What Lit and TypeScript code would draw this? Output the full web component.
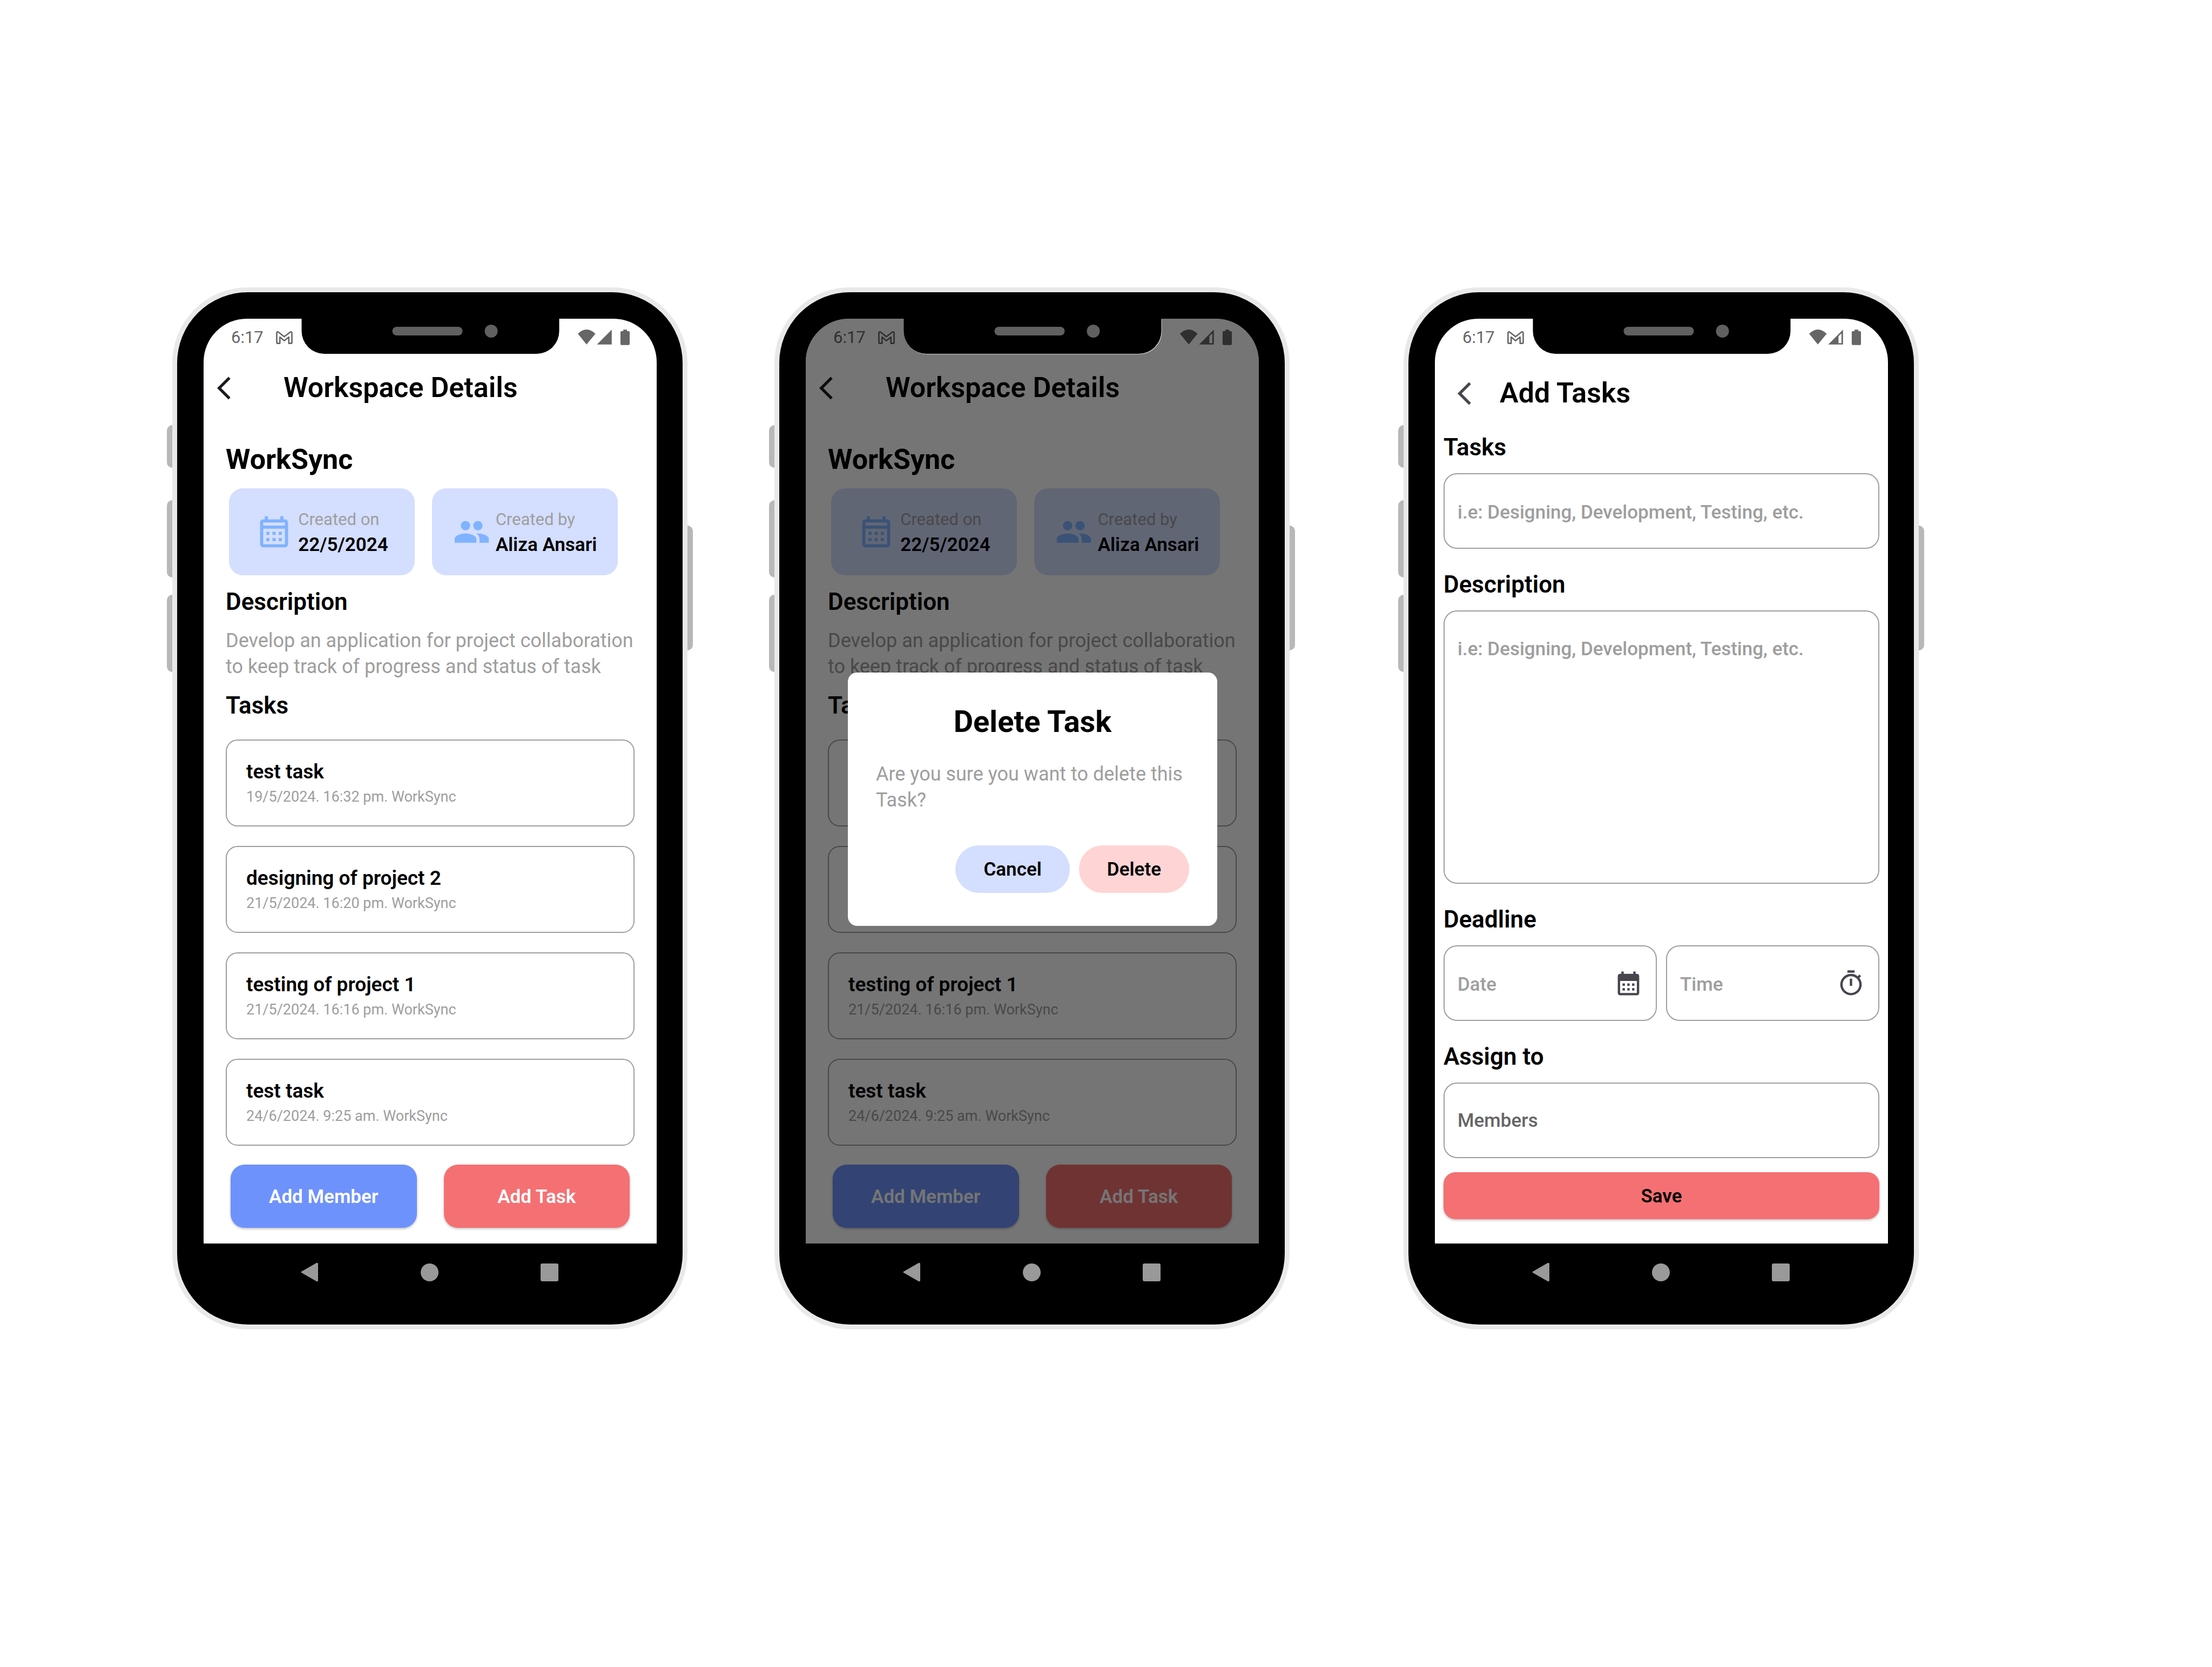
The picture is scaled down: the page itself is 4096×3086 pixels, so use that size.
import { LitElement, html, css } from "lit";
import { customElement, property } from "lit/decorators.js";

interface Task {
  title: string;
  detail: string;
}

const TASKS: Task[] = [
  { title: "test task", detail: "19/5/2024. 16:32 pm. WorkSync" },
  { title: "designing of project 2", detail: "21/5/2024. 16:20 pm. WorkSync" },
  { title: "testing of project 1", detail: "21/5/2024. 16:16 pm. WorkSync" },
  { title: "test task", detail: "24/6/2024. 9:25 am. WorkSync" },
];

const base = css`
  * {
    box-sizing: border-box;
  }
  h1,
  h2,
  h3,
  p,
  ul {
    margin: 0;
    padding: 0;
    list-style: none;
  }
  button,
  input,
  textarea {
    font: inherit;
    color: inherit;
    margin: 0;
    padding: 0;
    border: 0;
    background: none;
    outline: none;
  }
  svg {
    display: block;
    flex: none;
  }
  .title {
    font-size: 52px;
    line-height: 60px;
    font-weight: 600;
  }
  .heading {
    display: block;
    font-size: 44px;
    line-height: 49px;
    font-weight: 600;
  }
  .chevron {
    display: block;
    width: 51px;
    height: 51px;
  }
`;

const chevron = html`<svg width="51" height="51" viewBox="0 0 24 24" fill="currentColor">
  <path d="M11.67 3.87 9.9 2.1 0 12l9.9 9.9 1.77-1.77L3.54 12z" />
</svg>`;

/** Handset body with its side keys, status bar, screen and navigation keys. */
@customElement("phone-frame")
export class PhoneFrame extends LitElement {
  @property({ type: Boolean }) partialSignal = false;
  @property({ type: Boolean }) dimmed = false;

  static styles = [
    base,
    css`
      :host {
        display: block;
      }
      .body {
        position: relative;
        border: 9px solid #e9e9e9;
        border-radius: 140px;
        background: #000;
        padding: 49px 48px 44px 49px;
      }
      .key {
        position: absolute;
        width: 10px;
        background: #b8b8b8;
        border-radius: 10px 0 0 10px;
        left: -19px;
        height: 143px;
      }
      .silent {
        top: 246px;
        height: 79px;
      }
      .up {
        top: 385px;
      }
      .down {
        top: 560px;
      }
      .power {
        left: auto;
        right: -19px;
        top: 432px;
        height: 231px;
        border-radius: 0 10px 10px 0;
      }
      .screen {
        position: relative;
        display: flex;
        flex-direction: column;
        min-height: 1712px;
        background: #fff;
        border-radius: 80px 80px 0 0;
        overflow: hidden;
      }
      .status {
        display: flex;
        align-items: center;
        gap: 23px;
        height: 67px;
        padding: 2px 50px 0 51px;
        color: #666;
        font-size: 31px;
        line-height: 36px;
      }
      .note {
        width: 24px;
        height: 24px;
        background: #666;
        border-radius: 3px;
      }
      .levels {
        margin-left: auto;
      }
      .notch {
        position: absolute;
        top: 0;
        left: 50%;
        transform: translateX(-50%);
        width: 477px;
        height: 65px;
        padding: 11px 0 0 168px;
        display: flex;
        align-items: flex-start;
        gap: 41px;
        background: #000;
        border-radius: 0 0 42px 42px;
      }
      .dimmed .notch {
        box-shadow: 1px 1px 0 #d0d0d0;
      }
      .speaker {
        width: 130px;
        height: 16px;
        margin-top: 4px;
        border-radius: 8px;
        background: #606060;
      }
      .camera {
        width: 24px;
        height: 24px;
        border-radius: 50%;
        background: #606060;
      }
      .content {
        flex: 1;
        display: flex;
        flex-direction: column;
      }
      .keys {
        display: flex;
        justify-content: space-between;
        align-items: center;
        height: 106px;
        padding: 0 182px 0 180px;
        color: #999;
      }
    `,
  ];

  render() {
    return html`
      <div class="body ${this.dimmed ? "dimmed" : ""}">
        <span class="key silent"></span>
        <span class="key up"></span>
        <span class="key down"></span>
        <span class="key power"></span>
        <div class="screen">
          <div class="status">
            <span>6:17</span>
            <svg width="31" height="24" viewBox="389 61 129 100" fill="none" stroke="#666" stroke-width="11" stroke-linejoin="round">
              <path d="M395 148V76q0-12 12-8l46 36 46-36q13-4 13 8v72q0 7-7 7h-17v-48l-35 28-34-28v48h-17q-7 0-7-7z" />
            </svg>
            <span class="note"></span>
            <svg class="levels" width="96" height="29" viewBox="46 52 404 122" fill="#666">
              <path d="M46 85q68-66 137 0l-69 84z" />
              <path fill-rule="evenodd" d=${"M195 169 310 53v116z" + (this.partialSignal ? "M275 104v54h23V82z" : "")} />
              <path d="M400 65V53h29v12h13q8 0 8 8v92q0 8-8 8h-56q-8 0-8-8V73q0-8 8-8z" />
            </svg>
          </div>
          <div class="content"><slot></slot></div>
          <slot name="overlay"></slot>
          <div class="notch"><span class="speaker"></span><span class="camera"></span></div>
        </div>
        <div class="keys">
          <button aria-label="Back">
            <svg width="32" height="36" viewBox="0 0 32 36" fill="currentColor"><path d="M2 16.500 29 1q3-1 3 2v30q0 3-3 2L2 19.500q-3-1.500 0-3z" /></svg>
          </button>
          <button aria-label="Home">
            <svg width="33" height="33" viewBox="0 0 33 33" fill="currentColor"><circle cx="16.500" cy="16.500" r="16.500" /></svg>
          </button>
          <button aria-label="Recent apps">
            <svg width="33" height="33" viewBox="0 0 33 33" fill="currentColor"><rect width="33" height="33" rx="3" /></svg>
          </button>
        </div>
      </div>
    `;
  }
}

/** Workspace summary with its task list. */
@customElement("workspace-screen")
export class WorkspaceScreen extends LitElement {
  static styles = [
    base,
    css`
      :host {
        display: block;
      }
      .bar {
        display: flex;
        align-items: center;
        gap: 72px;
        height: 120px;
        padding: 2px 0 0 25px;
        color: #000;
      }
      .chevron {
        color: #1d1b20;
      }
      .page {
        padding: 44px 41px 29px;
      }
      .name {
        font-weight: 700;
      }
      .facts {
        display: grid;
        grid-template-columns: 1fr 1fr;
        gap: 32px;
        padding: 23px 31px 25px 6px;
      }
      .fact {
        display: flex;
        align-items: center;
        justify-content: center;
        gap: 10px;
        height: 161px;
        border-radius: 26px;
        background: #d4deff;
      }
      .fact svg {
        fill: #7fb3ff;
      }
      .label {
        padding-top: 2px;
        font-size: 31px;
        line-height: 46px;
        color: #9e9e9e;
      }
      .value {
        font-size: 35px;
        line-height: 48px;
        font-weight: 600;
        white-space: nowrap;
      }
      .about {
        padding: 23px 0 24px;
        font-size: 36px;
        line-height: 48px;
        color: #9e9e9e;
      }
      .tasks {
        display: grid;
        gap: 36px;
        padding: 38px 0 35px;
      }
      .task {
        border: 2px solid #9e9e9e;
        border-radius: 22px;
        padding: 38px 36px;
      }
      .name-of-task {
        font-size: 37px;
        line-height: 40px;
        font-weight: 600;
      }
      .detail {
        padding-top: 11px;
        font-size: 27px;
        line-height: 30px;
        color: #9e9e9e;
      }
      .actions {
        display: grid;
        grid-template-columns: 1fr 1fr;
        gap: 50px;
        padding: 0 9px;
      }
      .action {
        height: 117px;
        padding-top: 2px;
        border-radius: 26px;
        color: #fff;
        font-size: 35px;
        font-weight: 600;
        box-shadow: 0 2px 4px rgba(0, 0, 0, 0.25);
      }
      .member {
        background: #6e92fc;
      }
      .add {
        background: #f57072;
      }
    `,
  ];

  render() {
    return html`
      <header class="bar">
        <button class="chevron" aria-label="Back">${chevron}</button>
        <h1 class="title">Workspace Details</h1>
      </header>
      <div class="page">
        <h2 class="title name">WorkSync</h2>
        <div class="facts">
          <div class="fact">
            <svg width="69" height="69" viewBox="0 0 24 24">
              <path d="M19 4h-1V2h-2v2H8V2H6v2H5c-1.110 0-1.990.9-1.990 2L3 20a2 2 0 0 0 2 2h14c1.100 0 2-.9 2-2V6c0-1.100-.9-2-2-2zm0 16H5V10h14v10zm0-12H5V6h14v2zM9 14H7v-2h2v2zm4 0h-2v-2h2v2zm4 0h-2v-2h2v2zm-8 4H7v-2h2v2zm4 0h-2v-2h2v2zm4 0h-2v-2h2v2z" />
            </svg>
            <div>
              <p class="label">Created on</p>
              <p class="value">22/5/2024</p>
            </div>
          </div>
          <div class="fact">
            <svg width="69" height="69" viewBox="0 0 24 24">
              <path d="M16 11c1.660 0 2.990-1.340 2.990-3S17.660 5 16 5s-3 1.340-3 3 1.340 3 3 3zm-8 0c1.660 0 2.990-1.340 2.990-3S9.660 5 8 5 5 6.340 5 8s1.340 3 3 3zm0 2c-2.330 0-7 1.170-7 3.500V19h14v-2.500c0-2.330-4.670-3.500-7-3.500zm8 0c-.29 0-.62.02-.97.05 1.160.84 1.970 1.970 1.970 3.450V19h6v-2.500c0-2.330-4.670-3.500-7-3.500z" />
            </svg>
            <div>
              <p class="label">Created by</p>
              <p class="value">Aliza Ansari</p>
            </div>
          </div>
        </div>
        <h3 class="heading">Description</h3>
        <p class="about">Develop an application for project collaboration to keep track of progress and status of task</p>
        <h3 class="heading">Tasks</h3>
        <ul class="tasks">
          ${TASKS.map(
            (task) => html`<li class="task">
              <p class="name-of-task">${task.title}</p>
              <p class="detail">${task.detail}</p>
            </li>`
          )}
        </ul>
        <div class="actions">
          <button class="action member">Add Member</button>
          <button class="action add">Add Task</button>
        </div>
      </div>
    `;
  }
}

/** Confirmation shown over a dimmed screen. */
@customElement("delete-dialog")
export class DeleteDialog extends LitElement {
  static styles = [
    base,
    css`
      .scrim {
        position: absolute;
        inset: 0;
        display: flex;
        align-items: center;
        padding: 67px 77px 0 78px;
        background: rgba(0, 0, 0, 0.54);
      }
      .dialog {
        flex: 1;
        padding: 59px 52px 61px;
        border-radius: 17px;
        background: #fff;
      }
      .question {
        font-size: 56px;
        line-height: 64px;
        font-weight: 700;
        text-align: center;
      }
      .text {
        padding: 41px 0 60px;
        font-size: 36px;
        line-height: 48px;
        color: #9e9e9e;
      }
      .choices {
        display: flex;
        justify-content: flex-end;
        gap: 17px;
      }
      .choice {
        height: 88px;
        padding: 0 52px;
        border-radius: 44px;
        font-size: 35px;
        font-weight: 600;
      }
      .cancel {
        background: #d4deff;
      }
      .delete {
        background: #ffd4d4;
      }
    `,
  ];

  render() {
    return html`
      <div class="scrim">
        <div class="dialog" role="dialog" aria-modal="true" aria-labelledby="question">
          <h2 class="question" id="question">Delete Task</h2>
          <p class="text">Are you sure you want to delete this Task?</p>
          <div class="choices">
            <button class="choice cancel">Cancel</button>
            <button class="choice delete">Delete</button>
          </div>
        </div>
      </div>
    `;
  }
}

/** Form that creates a task. */
@customElement("add-task-screen")
export class AddTaskScreen extends LitElement {
  static styles = [
    base,
    css`
      :host {
        display: block;
      }
      .bar {
        display: flex;
        align-items: center;
        gap: 27px;
        height: 140px;
        padding: 2px 0 0 42px;
      }
      .chevron {
        color: #49454f;
      }
      .form {
        padding: 7px 16px 45px;
      }
      .group {
        display: grid;
        gap: 23px;
        padding-bottom: 42px;
      }
      .group.last {
        padding-bottom: 26px;
      }
      .pair {
        display: grid;
        grid-template-columns: 1fr 1fr;
        gap: 17px;
      }
      .field {
        display: flex;
        align-items: center;
        height: 140px;
        padding: 0 24px;
        border: 2px solid #9e9e9e;
        border-radius: 25px;
        color: #49454f;
      }
      .field.tall {
        height: 506px;
      }
      .input {
        flex: 1;
        min-width: 0;
        width: 100%;
        height: 100%;
        font-size: 35px;
        line-height: 48px;
        font-weight: 500;
        padding-top: 4px;
        resize: none;
      }
      .tall .input {
        padding-top: 46px;
      }
      .input::placeholder {
        color: #9e9e9e;
        opacity: 1;
      }
      .members {
        padding-top: 0;
      }
      .members::placeholder {
        color: #666;
      }
      .save {
        display: block;
        width: 100%;
        height: 87px;
        padding-top: 2px;
        border-radius: 22px;
        background: #f57072;
        font-size: 35px;
        font-weight: 600;
        box-shadow: 0 2px 4px rgba(0, 0, 0, 0.25);
      }
    `,
  ];

  render() {
    return html`
      <header class="bar">
        <button class="chevron" aria-label="Back">${chevron}</button>
        <h1 class="title">Add Tasks</h1>
      </header>
      <form class="form" @submit=${(e: Event) => e.preventDefault()}>
        <div class="group">
          <label class="heading" for="task">Tasks</label>
          <div class="field">
            <input class="input" id="task" placeholder="i.e: Designing, Development, Testing, etc." />
          </div>
        </div>
        <div class="group">
          <label class="heading" for="description">Description</label>
          <div class="field tall">
            <textarea class="input" id="description" placeholder="i.e: Designing, Development, Testing, etc."></textarea>
          </div>
        </div>
        <div class="group">
          <label class="heading" for="date">Deadline</label>
          <div class="pair">
            <div class="field">
              <input class="input" id="date" placeholder="Date" />
              <svg width="53" height="53" viewBox="0 0 24 24" fill="currentColor">
                <path d="M19 4h-1V2h-2v2H8V2H6v2H5c-1.110 0-1.990.9-1.990 2L3 20a2 2 0 0 0 2 2h14c1.100 0 2-.9 2-2V6c0-1.100-.9-2-2-2zm0 16H5V10h14v10zM9 14H7v-2h2v2zm4 0h-2v-2h2v2zm4 0h-2v-2h2v2zm-8 4H7v-2h2v2zm4 0h-2v-2h2v2zm4 0h-2v-2h2v2z" />
              </svg>
            </div>
            <div class="field">
              <input class="input" id="time" placeholder="Time" aria-label="Deadline time" />
              <svg width="53" height="53" viewBox="0 0 24 24" fill="currentColor">
                <path d="M15 1H9v2h6V1zm-4 13h2V8h-2v6zm8.030-6.610 1.420-1.420c-.43-.51-.9-.99-1.410-1.410l-1.420 1.420A8.960 8.960 0 0 0 12 4a9 9 0 1 0 7.030 3.390zM12 20c-3.870 0-7-3.130-7-7s3.130-7 7-7 7 3.130 7 7-3.130 7-7 7z" />
              </svg>
            </div>
          </div>
        </div>
        <div class="group last">
          <label class="heading" for="members">Assign to</label>
          <div class="field">
            <input class="input members" id="members" placeholder="Members" />
          </div>
        </div>
        <button class="save">Save</button>
      </form>
    `;
  }
}

@customElement("app-root")
export class AppRoot extends LitElement {
  static styles = css`
    :host {
      display: block;
      min-height: 100vh;
      box-sizing: border-box;
      padding: 532px 0;
      background: #fff;
      color: #000;
      font-family: Roboto, "Liberation Sans", sans-serif;
    }
    .board {
      display: grid;
      grid-template-columns: 319fr 954fr 161fr 954fr 211fr 954fr 543fr;
      align-items: start;
    }
    .first {
      grid-column: 2;
    }
    .second {
      grid-column: 4;
    }
    .third {
      grid-column: 6;
    }
  `;

  render() {
    return html`
      <main class="board">
        <phone-frame class="first"><workspace-screen></workspace-screen></phone-frame>
        <phone-frame class="second" partialSignal dimmed>
          <workspace-screen></workspace-screen>
          <delete-dialog slot="overlay"></delete-dialog>
        </phone-frame>
        <phone-frame class="third" partialSignal><add-task-screen></add-task-screen></phone-frame>
      </main>
    `;
  }
}
